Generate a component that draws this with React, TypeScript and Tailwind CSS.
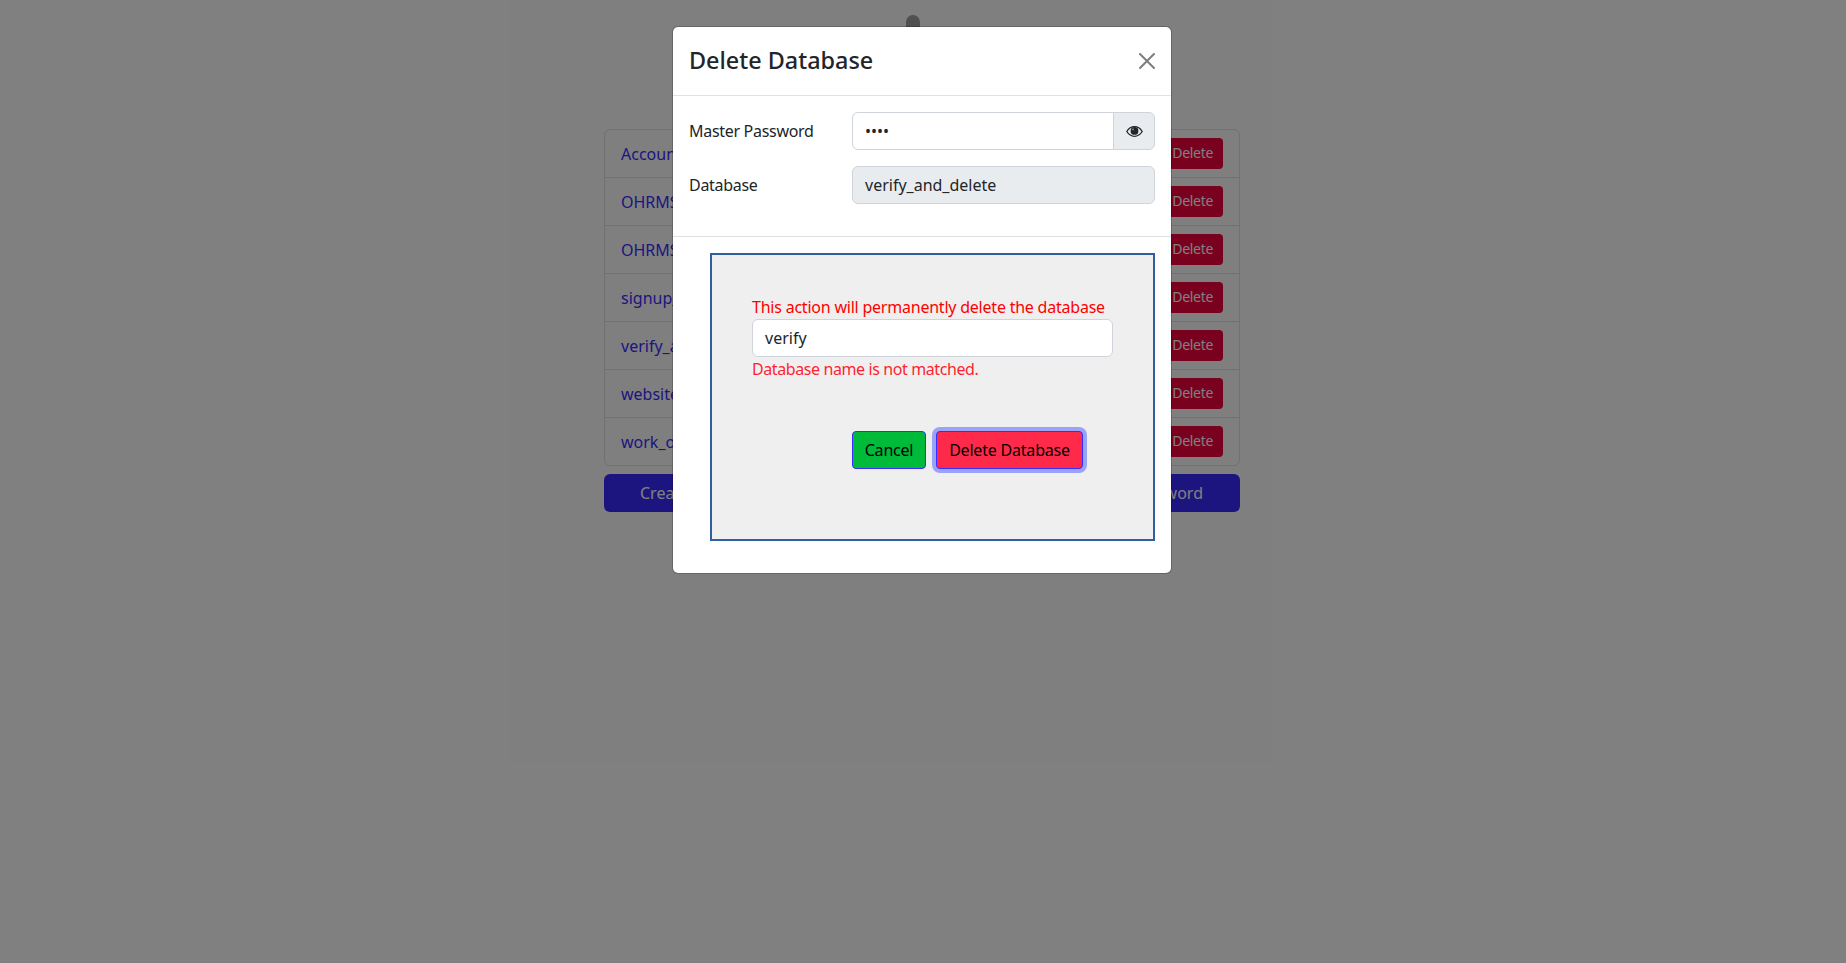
import React from "react";

const rows = ["Accounting", "OHRMS_demo", "OHRMS_test", "signup_test", "verify_and_delete", "website_db", "work_order"];

export default function App() {
  return (
    <div className="relative h-[963px] w-full overflow-hidden bg-white text-[16px] text-[#212529] font-['Noto_Sans',sans-serif]">
      <div className="flex flex-col items-center pt-[15px]">
        <div className="-ml-[21px] h-[40px] w-[14px] rounded-full bg-[#a0a0a0]" />
        <div className="mr-[2px] mt-[74px] w-[636px]">
          <ul className="rounded-[6px] border border-[#dee2e6]">
            {rows.map((r, i) => (
              <li key={r} className={`flex items-center justify-between pl-[16px] pr-[16px] ${i ? "h-[48px] border-t border-[#dee2e6]" : "h-[47px]"}`}>
                <span className="text-[#3b2bff]">{r}</span>
                <button className="h-[31px] rounded-[4px] bg-[#f40040] pb-[2px] pl-[8px] pr-[10px] text-[14px] tracking-[-0.3px] text-white">Delete</button>
              </li>
            ))}
          </ul>
          <div className="mt-[8px] flex justify-between">
            <button className="h-[38px] rounded-[6px] bg-[#3b2bff] px-[36px] text-white">Create Database</button>
            <button className="h-[38px] rounded-[6px] bg-[#3b2bff] px-[37px] text-white">Change Master Password</button>
          </div>
        </div>
      </div>

      <div className="absolute inset-0 bg-black/50" />

      <div className="absolute left-[672px] top-[26px] flex h-[548px] w-[500px] flex-col rounded-[6px] border border-black/20 bg-white bg-clip-padding">
        <div className="flex h-[69px] shrink-0 items-center justify-between border-b border-[#dee2e6] px-[16px] pb-[1px]">
          <h5 className="pb-[2px] text-[23.4px] font-medium leading-[30px]">Delete Database</h5>
          <svg viewBox="0 0 16 16" className="h-[16px] w-[16px] opacity-50" fill="#000">
            <path d="M.293.293a1 1 0 0 1 1.414 0L8 6.586 14.293.293a1 1 0 1 1 1.414 1.414L9.414 8l6.293 6.293a1 1 0 0 1-1.414 1.414L8 9.414l-6.293 6.293a1 1 0 0 1-1.414-1.414L6.586 8 .293 1.707a1 1 0 0 1 0-1.414z" />
          </svg>
        </div>
        <div className="flex h-[141px] shrink-0 flex-col gap-[16px] border-b border-[#dee2e6] px-[16px] pt-[16px]">
          <div className="flex items-center">
            <label className="w-[163px] tracking-[-0.3px]">Master Password</label>
            <div className="flex h-[38px] w-[303px]">
              <div className="flex flex-1 items-center rounded-l-[6px] border border-[#ced4da] px-[12px]">••••</div>
              <div className="-ml-px flex w-[42px] items-center justify-center rounded-r-[6px] border border-[#ced4da] bg-[#e9ecef]">
                <svg viewBox="0 0 17 11" className="h-[11px] w-[17px]">
                  <path d="M0.8 5.5C3 2 5.5 0.7 8.5 0.7C11.5 0.7 14 2 16.2 5.5C14 9 11.5 10.3 8.5 10.3C5.5 10.3 3 9 0.8 5.5Z" fill="none" stroke="#212529" strokeWidth="1.3" />
                  <circle cx="8.5" cy="4.9" r="3.9" fill="#212529" />
                  <circle cx="7" cy="3.4" r="0.9" fill="#8a8f94" />
                </svg>
              </div>
            </div>
          </div>
          <div className="flex items-center">
            <label className="w-[163px] tracking-[-0.3px]">Database</label>
            <div className="flex h-[38px] w-[303px] items-center rounded-[6px] border border-[#ced4da] bg-[#e9ecef] px-[12px]">verify_and_delete</div>
          </div>
        </div>
        <div className="ml-[37px] mt-[16px] h-[288px] w-[445px] border-2 border-[#2f5f9f] bg-[#efefef] pl-[40px] pt-[40px]">
          <div className="leading-[24px] tracking-[-0.22px] text-[#ff0000]">This action will permanently delete the database</div>
          <div className="flex h-[38px] w-[361px] items-center rounded-[6px] border border-[#ced4da] bg-white px-[12px]">verify</div>
          <div className="leading-[24px] tracking-[-0.4px] text-[#ff1f30]">Database name is not matched.</div>
          <div className="ml-[100px] mt-[50px] flex gap-[10px]">
            <button className="h-[38px] w-[74px] rounded-[4px] border border-[#3b2bff] bg-[#00bb3a] tracking-[-0.2px] text-black">Cancel</button>
            <button className="h-[38px] w-[147px] rounded-[4px] border border-[#3b2bff] bg-[#ff2a4a] tracking-[-0.2px] text-black shadow-[0_0_0_4px_#98a4f8]">Delete Database</button>
          </div>
        </div>
      </div>
    </div>
  );
}
